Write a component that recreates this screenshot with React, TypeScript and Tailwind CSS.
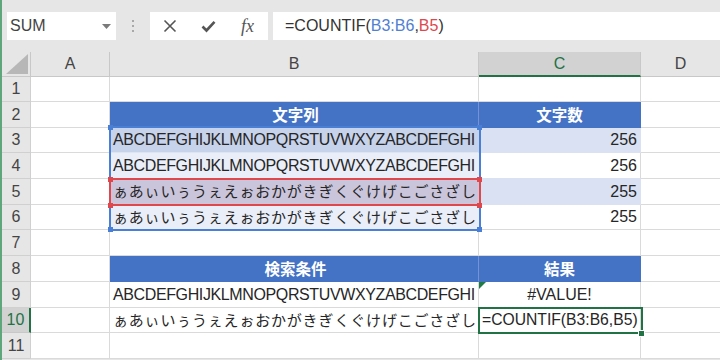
import React from "react";

const FONT = '"Liberation Sans", "Noto Sans CJK JP", sans-serif';
const JP = '"Noto Sans CJK JP", "Liberation Sans", sans-serif';

const LATIN = "ABCDEFGHIJKLMNOPQRSTUVWXYZABCDEFGHI";
const KANA = "ぁあぃいぅうぇえぉおかがきぎくぐけげこごさざし";

const rowH = [25, 26, 25, 26, 26, 25, 26, 26, 26, 25, 26];

type CellSpec = {
  bBg?: string;
  bBorder?: string;
  cBg?: string;
  cBorder?: string;
  b?: React.ReactNode;
  c?: React.ReactNode;
};

function LatinText() {
  return (
    <span className="text-[16px] tracking-[-0.38px] text-[#262626]" style={{ fontFamily: FONT }}>
      {LATIN}
    </span>
  );
}

function KanaText() {
  return (
    <span
      className="text-[15px] tracking-[0.8px] text-[#262626]"
      style={{ fontFamily: JP }}
    >
      {KANA}
    </span>
  );
}

function HeadText({ children }: { children: React.ReactNode }) {
  return (
    <span className="w-full text-center text-[15.5px] font-bold text-white" style={{ fontFamily: JP }}>
      {children}
    </span>
  );
}

function Num({ v }: { v: string }) {
  return <span className="ml-auto pr-[3px] text-[16px] text-[#262626]">{v}</span>;
}

const rows: CellSpec[] = [
  {},
  {
    bBg: "bg-[#4472c4]",
    bBorder: "border-b-[#4472c4] border-r-[#7393d3]",
    cBg: "bg-[#4472c4]",
    cBorder: "border-b-[#4472c4] border-r-[#4472c4]",
    b: <HeadText>文字列</HeadText>,
    c: <HeadText>文字数</HeadText>,
  },
  {
    bBg: "bg-[#c6d3eb]",
    bBorder: "border-b-[#dde5f3] border-r-[#c6d3eb]",
    cBg: "bg-[#d9e1f2]",
    cBorder: "border-b-[#d9e1f2] border-r-[#d9e1f2]",
    b: <LatinText />,
    c: <Num v="256" />,
  },
  {
    bBg: "bg-[#e9eef8]",
    bBorder: "border-b-[#e9eef8] border-r-[#e9eef8]",
    cBg: "bg-white",
    cBorder: "border-b-[#d9e1f2] border-r-[#dadada]",
    b: <LatinText />,
    c: <Num v="256" />,
  },
  {
    bBg: "bg-[#cac5db]",
    bBorder: "border-b-[#cac5db] border-r-[#cac5db]",
    cBg: "bg-[#d9e1f2]",
    cBorder: "border-b-[#d9e1f2] border-r-[#d9e1f2]",
    b: <KanaText />,
    c: <Num v="255" />,
  },
  {
    bBg: "bg-[#e9eef8]",
    bBorder: "border-b-[#e9eef8] border-r-[#e9eef8]",
    cBg: "bg-white",
    cBorder: "border-b-[#dadada] border-r-[#dadada]",
    b: <KanaText />,
    c: <Num v="255" />,
  },
  {},
  {
    bBg: "bg-[#4472c4]",
    bBorder: "border-b-[#4472c4] border-r-[#7393d3]",
    cBg: "bg-[#4472c4]",
    cBorder: "border-b-[#4472c4] border-r-[#4472c4]",
    b: <HeadText>検索条件</HeadText>,
    c: <HeadText>結果</HeadText>,
  },
  {
    b: <LatinText />,
    c: (
      <span className="w-full text-center text-[16px] text-[#262626]">#VALUE!</span>
    ),
  },
  {
    b: <KanaText />,
    c: (
      <span className="pl-[3px] text-[15.7px] text-[#262626]">=COUNTIF(B3:B6,B5)</span>
    ),
  },
  {},
];

function Handle({ cls }: { cls: string }) {
  return <div className={`absolute h-[5px] w-[5px] ${cls}`} />;
}

export default function App() {
  return (
    <div
      className="relative h-[360px] w-[720px] overflow-hidden border-l-2 border-[#5fa77a] bg-[#e6e6e6]"
      style={{ fontFamily: FONT }}
    >
      {/* Toolbar */}
      <div className="flex h-[52px] items-start pt-[12px]">
        <div className="ml-[5px] flex h-[28px] w-[109px] items-center justify-between bg-white pl-[3px] pr-[5px]">
          <span className="text-[16px] text-[#444]">SUM</span>
          <svg width="9" height="5" viewBox="0 0 9 5">
            <path d="M0 0 L9 0 L4.5 5 Z" fill="#7a7a7a" />
          </svg>
        </div>
        <div className="flex h-[28px] w-[34px] flex-col items-center justify-center gap-[3px]">
          <div className="h-[2px] w-[2px] bg-[#a8a8a8]" />
          <div className="h-[2px] w-[2px] bg-[#a8a8a8]" />
          <div className="h-[2px] w-[2px] bg-[#a8a8a8]" />
        </div>
        <div className="flex h-[28px] w-[118px] items-center bg-white">
          <div className="flex w-[39px] justify-center">
            <svg width="14" height="14" viewBox="0 0 14 14">
              <path d="M1.5 1.5 L12.5 12.5 M12.5 1.5 L1.5 12.5" stroke="#555" strokeWidth="1.6" />
            </svg>
          </div>
          <div className="flex w-[39px] justify-center">
            <svg width="15" height="13" viewBox="0 0 15 13">
              <path d="M1.5 6.5 L5.5 10.5 L13.5 1.8" stroke="#555" strokeWidth="2.6" fill="none" />
            </svg>
          </div>
          <div className="flex w-[39px] justify-center">
            <span
              className="text-[18px] italic leading-none text-[#555]"
              style={{ fontFamily: '"Liberation Serif", serif' }}
            >
              fx
            </span>
          </div>
        </div>
        <div className="ml-[5px] flex h-[28px] flex-1 items-center bg-white pl-[12px] text-[16px] text-[#333]">
          <span>=COUNTIF(</span>
          <span className="text-[#4f80d4]">B3:B6</span>
          <span>,</span>
          <span className="text-[#e0474c]">B5</span>
          <span>)</span>
        </div>
      </div>

      {/* Column headers */}
      <div className="flex h-[25px] text-[16px] text-[#444]">
        <div className="relative w-[29px] shrink-0 border-b border-r border-[#c8c8c8]">
          <svg className="absolute bottom-[2px] right-[2px]" width="22" height="20" viewBox="0 0 22 20">
            <path d="M22 0 L22 20 L0 20 Z" fill="#b7b7b7" />
          </svg>
        </div>
        <div className="flex w-[79px] shrink-0 items-center justify-center border-b border-r border-[#c8c8c8]">A</div>
        <div className="flex w-[369px] shrink-0 items-center justify-center border-b border-r border-[#c8c8c8]">B</div>
        <div className="flex w-[162px] shrink-0 items-center justify-center border-b-2 border-r border-b-[#217346] border-r-[#c8c8c8] bg-[#d2d2d2] text-[#217346]">
          C
        </div>
        <div className="flex flex-1 items-center justify-center border-b border-[#c8c8c8]">D</div>
      </div>

      {/* Body */}
      {rows.map((r, i) => {
        const h = rowH[i] === 25 ? "h-[25px]" : "h-[26px]";
        const active = i === 9;
        return (
          <div key={i} className={`flex ${h}`}>
            <div
              className={
                active
                  ? "flex w-[29px] shrink-0 items-center justify-center border-b border-r-2 border-b-[#c8c8c8] border-r-[#217346] bg-[#d2d2d2] text-[16px] text-[#217346]"
                  : "flex w-[29px] shrink-0 items-center justify-center border-b border-r border-[#d0d0d0] text-[16px] text-[#444]"
              }
            >
              {i + 1}
            </div>
            <div className="w-[79px] shrink-0 border-b border-r border-[#dadada] bg-white" />
            <div
              className={`flex w-[369px] shrink-0 items-center overflow-hidden whitespace-nowrap border-b border-r pl-[3px] ${
                r.bBg ?? "bg-white"
              } ${r.bBorder ?? "border-[#dadada]"}`}
            >
              {r.b}
            </div>
            <div
              className={`flex w-[162px] shrink-0 items-center overflow-hidden whitespace-nowrap border-b border-r ${
                r.cBg ?? "bg-white"
              } ${r.cBorder ?? "border-[#dadada]"}`}
            >
              {r.c}
            </div>
            <div className="flex-1 border-b border-[#dadada] bg-white" />
          </div>
        );
      })}

      {/* Blue reference range B3:B6 */}
      <div className="absolute left-[107px] top-[126px] h-[105px] w-[372px] border-2 border-[#4a7fd6]" />
      <Handle cls="left-[106px] top-[125px] bg-[#4a7fd6]" />
      <Handle cls="left-[475px] top-[125px] bg-[#4a7fd6]" />
      <Handle cls="left-[106px] top-[227px] bg-[#4a7fd6]" />
      <Handle cls="left-[475px] top-[227px] bg-[#4a7fd6]" />

      {/* Red reference B5 */}
      <div className="absolute left-[107px] top-[178px] h-[28px] w-[372px] border-2 border-[#e0474c]" />
      <Handle cls="left-[106px] top-[177px] bg-[#e0474c]" />
      <Handle cls="left-[475px] top-[177px] bg-[#e0474c]" />
      <Handle cls="left-[106px] top-[203px] bg-[#e0474c]" />
      <Handle cls="left-[475px] top-[203px] bg-[#e0474c]" />

      {/* Error indicator C9 */}
      <svg className="absolute left-[477px] top-[282px]" width="7" height="7" viewBox="0 0 7 7">
        <path d="M0 0 L7 0 L0 7 Z" fill="#1e7b45" />
      </svg>

      {/* Active cell C10 */}
      <div className="absolute left-[476px] top-[307px] h-[27px] w-[165px] border-2 border-[#217346]" />
      <div className="absolute left-[636px] top-[330px] h-[7px] w-[7px] border border-white bg-[#217346]" />
    </div>
  );
}
